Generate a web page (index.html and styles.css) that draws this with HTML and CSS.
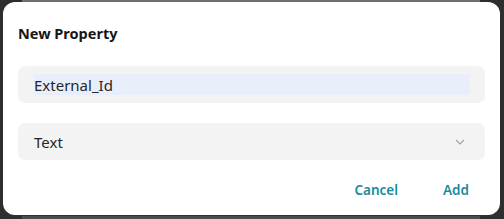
FILE: index.html
```html
<!DOCTYPE html>
<html>
<head>
<meta charset="utf-8">
<link rel="stylesheet" href="styles.css">
</head>
<body>
<div class="dialog">
  <div class="title">New Property</div>
  <div class="field">
    <input class="name-input" type="text" value="External_Id">
  </div>
  <div class="field select">
    <span class="select-value">Text</span>
    <svg class="chevron" width="10" height="6" viewBox="0 0 10 6"><path d="M1 1 L5 5 L9 1" fill="none" stroke="#a0a0a0" stroke-width="1.1"/></svg>
  </div>
  <div class="actions">
    <button class="btn">Cancel</button>
    <button class="btn">Add</button>
  </div>
</div>
</body>
</html>
```
FILE: styles.css
```css
html, body {
  margin: 0;
  padding: 0;
}
body {
  width: 504px;
  height: 219px;
  overflow: hidden;
  background:
    linear-gradient(#6e6e6e, #6e6e6e) 22px 0 / 458px 2px no-repeat,
    linear-gradient(#4c4c4c, #4c4c4c) 22px 216px / 458px 3px no-repeat,
    #2e2e2e;
  font-family: "Noto Sans", "Open Sans", sans-serif;
  padding-top: 2px;
  padding-left: 3px;
  box-sizing: border-box;
}
.dialog {
  width: 497px;
  height: 213px;
  box-sizing: border-box;
  background: #ffffff;
  border-radius: 12px;
  padding: 21px 15px 0 15px;
  display: flex;
  flex-direction: column;
}
.title {
  font-size: 14.5px;
  line-height: 20px;
  font-weight: 700;
  color: #161616;
  margin-bottom: 23px;
}
.field {
  height: 37px;
  box-sizing: border-box;
  background: #f3f3f3;
  border-radius: 7px;
  padding: 8px 15px 8px 16px;
  display: flex;
  align-items: center;
}
.name-input {
  flex: 1;
  height: 21px;
  border: none;
  outline: none;
  margin: 0;
  padding: 0;
  background: #e8effb;
  font-family: inherit;
  font-size: 15px;
  color: #262626;
}
.select {
  margin-top: 20px;
  justify-content: space-between;
  padding-right: 20px;
}
.select-value {
  font-size: 15px;
  color: #262626;
}
.chevron {
  display: block;
}
.actions {
  display: flex;
  justify-content: flex-end;
  gap: 13px;
  margin-top: 18px;
}
.btn {
  border: none;
  background: transparent;
  padding: 0 16px;
  height: 24px;
  font-family: inherit;
  font-size: 13.5px;
  font-weight: 600;
  color: #1a8aa0;
  cursor: pointer;
}
```
